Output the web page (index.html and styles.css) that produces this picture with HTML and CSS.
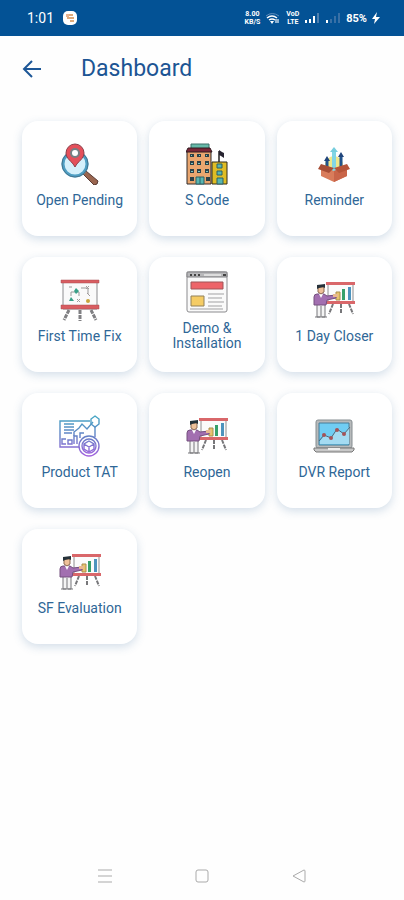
FILE: index.html
```html
<!DOCTYPE html>
<html lang="en">
<head>
    <meta charset="UTF-8">
    <meta name="viewport" content="width=device-width, initial-scale=1.0">
    <title>Dashboard</title>
    <link rel="stylesheet" href="styles.css">
</head>
<body>
    <!-- shared icon -->
    <svg class="defs" aria-hidden="true">
        <symbol id="presenter" viewBox="0 3 42 42">
            <path d="M20 28l-4 10M36 28l4 10M28 28v10" stroke="#77777a" stroke-width="2" stroke-dasharray="4 1" fill="none"/>
            <path d="M15 8h25v18H15z" fill="#fbfbfb" stroke="#8e8e90"/>
            <path d="M13 6h29v3H13zM13 25h29v3H13z" fill="#d9676a"/>
            <path d="M23 16h4v8h-4z" fill="#e8c36a" stroke="#a98d4e"/>
            <path d="M29 13h3v11h-3z" fill="#36a06a"/>
            <path d="M35 11h3v13h-3z" fill="#4d93bd"/>
            <path d="M4 28h8v13H4z" fill="#f4f4f4" stroke="#77777a"/>
            <path d="M8 30v11M2 41h5M9 41h5" stroke="#77777a" fill="none"/>
            <path d="M4 18h7l3 2 9-1v3l-9 2-1 5H1v-8q0-3 3-3z" fill="#a26fb0" stroke="#75507f"/>
            <path d="M6 18l2 4 2-4" fill="#fff"/>
            <path d="M20 18h5v3h-5z" fill="#e9b98f"/>
            <path d="M5 11h6v5l-3 2-3-2z" fill="#efc19a" stroke="#8d6b52"/>
            <path d="M4 13V9l8-1v4l-2-1-4 1z" fill="#26323a"/>
        </symbol>
    </svg>

    <div class="status-bar">
        <div class="status-left">
            <span class="clock">1:01</span>
            <svg width="16" height="16" viewBox="0 0 16 16">
                <rect x="1" y="1" width="14" height="14" rx="5" fill="#fff"/>
                <path d="M4 5h7M5 8h7M8 11h4" stroke="#dfab7c" stroke-width="2"/>
                <path d="M4 4h3v3H4z" fill="#e7b392"/>
            </svg>
        </div>
        <div class="status-right">
            <div class="stacked"><span>8.00</span><span>KB/S</span></div>
            <svg width="16" height="14" viewBox="0 0 16 14">
                <path d="M1 5q6-5 13 0" fill="none" stroke="#5f8dbb" stroke-width="1"/>
                <path d="M2 7q5-4 10 0M4 9q3-2 6 0" fill="none" stroke="#fff" stroke-width="1.5"/>
                <path d="M5 10h4l-2 3z" fill="#fff"/>
                <path d="M11 12V8M13 8v4" stroke="#dbe6f1" stroke-width="1.3"/>
            </svg>
            <div class="stacked"><span>VoD</span><span>LTE</span></div>
            <svg width="16" height="14" viewBox="0 0 16 14">
                <path d="M1 9h2v3H1zM5 8h2v4H5zM9 5h2v7H9z" fill="#fff"/>
                <path d="M13 2h2v10h-2z" fill="#4e7fae"/>
            </svg>
            <svg width="16" height="14" viewBox="0 0 16 14">
                <path d="M1 9h2v3H1z" fill="#fff"/>
                <path d="M5 8h2v4H5zM9 5h2v7H9zM13 2h2v10h-2z" fill="#3870a6"/>
            </svg>
            <span class="battery">85%</span>
            <svg width="8" height="14" viewBox="0 0 8 14"><path d="M5 1L0 8h3l-1 5 6-7H4z" fill="#fff"/></svg>
        </div>
    </div>

    <header class="top-bar">
        <button class="back" type="button" aria-label="Back">
            <svg width="20" height="20" viewBox="0 0 20 20">
                <path d="M10 2L2 10l8 8M2 10h17" fill="none" stroke="#1d5797" stroke-width="2"/>
            </svg>
        </button>
        <h1>Dashboard</h1>
    </header>

    <main class="tiles">
        <a class="tile" href="#">
            <svg class="icon" viewBox="0 0 42 42">
                <path d="M24 31l3-3 12 10q0 4-4 4z" fill="#9a6650" stroke="#5b3d36"/>
                <circle cx="16" cy="21" r="12" fill="#d5f0fb" stroke="#4f9fc4" stroke-width="3"/>
                <circle cx="16" cy="21" r="13" fill="none" stroke="#44758f" stroke-width="1"/>
                <path d="M16 24c-3-6-9-8-9-14a9 9 0 0 1 18 0c0 6-6 8-9 14z" fill="#e4505b" stroke="#8c3f4a"/>
                <circle cx="16" cy="10" r="5" fill="#777f84"/>
                <circle cx="16" cy="10" r="3" fill="#fff"/>
            </svg>
            <span>Open Pending</span>
        </a>
        <a class="tile" href="#">
            <svg class="icon" viewBox="0 0 42 42">
                <path d="M5 1h18v5H5z" fill="#66b9a8" stroke="#3b6f68"/>
                <path d="M1 8h24v33H1z" fill="#e9a66f" stroke="#2e2a2b"/>
                <path d="M2 5h22l2 4H0z" fill="#7b2637" stroke="#2e1a20"/>
                <path d="M26 19h15v22H26z" fill="#dfbd25" stroke="#2e2a1b"/>
                <path d="M4 11h4v3H4zM11 11h4v3h-4zM19 11h4v3h-4zM4 18h4v4H4zM11 18h4v4h-4zM19 18h4v4h-4zM4 26h4v4H4zM11 26h4v4h-4zM19 26h4v4h-4zM4 34h4v4H4zM20 34h4v4h-4z" fill="#2a4148"/>
                <path d="M5 12h1v1H5zM13 12h1v1h-1zM20 12h1v1h-1zM5 20h2v1H5zM12 20h2v1h-2zM20 20h2v1h-2zM5 28h2v1H5zM12 28h2v1h-2zM20 28h2v1h-2z" fill="#7ec5c2"/>
                <path d="M10 34h8v7h-8zM31 35h6v6h-6zM31 21h5v4h-5zM31 28h5v4h-5z" fill="#58b6b1" stroke="#2b6166"/>
                <path d="M14 34v7" stroke="#2b6166"/>
                <path d="M33 19V8" stroke="#222" stroke-width="1.5"/>
                <path d="M33 7l3 2 2 1v5l-3-2-2-1z" fill="#272431"/>
            </svg>
            <span>S Code</span>
        </a>
        <a class="tile" href="#">
            <svg class="icon" viewBox="0 0 42 42">
                <circle cx="21" cy="22" r="9" fill="#eee78b"/>
                <path d="M14 26V16M28 26V13" stroke="#21538c" stroke-width="3"/>
                <path d="M11 18l3-5 3 5zM25 14l3-5 3 5z" fill="#21457c"/>
                <path d="M21 29V8" stroke="#82d6e5" stroke-width="4"/>
                <path d="M17 9l4-5 4 5z" fill="#77cede"/>
                <path d="M8 23l13 5 13-5v10l-13 6-13-6z" fill="#d97c5b"/>
                <path d="M21 28l13-5v10l-13 6z" fill="#c96549"/>
                <path d="M8 21l13 4-5 5-11-4z" fill="#a74d35"/>
                <path d="M34 21l-13 4 5 5 11-4z" fill="#b6553a"/>
            </svg>
            <span>Reminder</span>
        </a>
        <a class="tile" href="#">
            <svg class="icon" viewBox="0 0 42 42">
                <path d="M10 31L5 41M21 31v11M32 31l5 10" stroke="#808083" stroke-width="3" stroke-dasharray="4 1"/>
                <path d="M4 3h34v27H4z" fill="#fafafa" stroke="#8c8c8f"/>
                <path d="M2 1h38v3H2zM2 26h38v4H2z" fill="#d95d61" stroke="#a64f52" stroke-width=".5"/>
                <path d="M12 17v-4h8v4M22 9h7v6M10 8h3" fill="none" stroke="#999"/>
                <path d="M27 7l3 3M30 7l-3 3M18 20l3 3M21 20l-3 3M28 14l3 3" stroke="#a39d9d"/>
                <path d="M12 18l3 4h-5zM17 9l3 3-3 3-2-3z" fill="#39a088"/>
                <circle cx="29" cy="22" r="2" fill="#c8a43c"/>
            </svg>
            <span>First Time Fix</span>
        </a>
        <a class="tile" href="#">
            <svg class="icon" viewBox="0 0 42 42">
                <rect x="1" y="1" width="40" height="40" rx="2" fill="#fafafa" stroke="#8b8b8e"/>
                <path d="M1 1h40v5H1z" fill="#b8b8ba" stroke="#808083"/>
                <path d="M4 4h2M8 4h2M12 4h2M37 4h3" stroke="#444" stroke-width="2"/>
                <path d="M18 4h17" stroke="#ddd" stroke-width="2"/>
                <path d="M5 11h32v7H5z" fill="#ed6469" stroke="#9f5558"/>
                <path d="M5 25h13v10H5z" fill="#f5cc65" stroke="#91805a"/>
                <path d="M22 23h16M22 27h14M22 31h16M22 35h14M4 38h33" stroke="#a1a1a3"/>
            </svg>
            <span>Demo &amp; Installation</span>
        </a>
        <a class="tile" href="#">
            <svg class="icon" viewBox="0 0 42 42"><use href="#presenter"/></svg>
            <span>1 Day Closer</span>
        </a>
        <a class="tile" href="#">
            <svg class="icon" viewBox="0 0 42 42">
                <defs>
                    <linearGradient id="tat" gradientUnits="userSpaceOnUse" x1="0" y1="2" x2="0" y2="42">
                        <stop offset="0" stop-color="#46a5c4"/>
                        <stop offset=".5" stop-color="#667fc6"/>
                        <stop offset="1" stop-color="#a561df"/>
                    </linearGradient>
                </defs>
                <g fill="none" stroke="url(#tat)" stroke-width="1.4">
                    <path d="M31 6H1v26h19M36 11v11"/>
                    <path d="M5 9h10M5 12h10M5 15h10M5 18h8"/>
                    <path d="M15 21v-4l5-4 3-4 5 5 6-7"/>
                    <path d="M7 24H3v5h4M9 25h4v4H9zM15 29v-8h3v8M21 23v-5h4"/>
                    <path d="M36 1l4 3v5l-4 3-4-3V4z"/>
                    <circle cx="30" cy="31" r="10"/>
                    <circle cx="30" cy="31" r="7"/>
                    <path d="M30 26l5 3v5l-5 3-5-3v-5zM25 29l5 3 5-3M30 32v5"/>
                </g>
            </svg>
            <span>Product TAT</span>
        </a>
        <a class="tile" href="#">
            <svg class="icon" viewBox="0 0 42 42"><use href="#presenter"/></svg>
            <span>Reopen</span>
        </a>
        <a class="tile" href="#">
            <svg class="icon" viewBox="0 0 42 42">
                <rect x="3" y="5" width="36" height="28" rx="2" fill="#b7babb" stroke="#858d90"/>
                <path d="M6 8h30v22H6z" fill="#70cdf3" stroke="#477d98"/>
                <path d="M7 26l5-6 6 3 6-9 7 5 5-7v17H7z" fill="#a4dbf2"/>
                <path d="M6 26l5-6 7 3 6-9 7 5 6-7" fill="none" stroke="#4c687b"/>
                <circle cx="11" cy="20" r="2" fill="#a45358"/>
                <circle cx="18" cy="23" r="2" fill="#a45358"/>
                <circle cx="24" cy="15" r="2" fill="#a45358"/>
                <circle cx="31" cy="19" r="2" fill="#a45358"/>
                <path d="M1 33h40v2l-2 2H3l-2-2z" fill="#c8c8c8" stroke="#777"/>
                <path d="M15 33h12v2H15z" fill="#eee"/>
            </svg>
            <span>DVR Report</span>
        </a>
        <a class="tile" href="#">
            <svg class="icon" viewBox="0 0 42 42"><use href="#presenter"/></svg>
            <span>SF Evaluation</span>
        </a>
    </main>

    <nav class="system-nav">
        <button type="button" aria-label="Recent apps">
            <svg width="16" height="16" viewBox="0 0 16 16"><path d="M1 2h14M1 8h14M1 14h14"/></svg>
        </button>
        <button type="button" aria-label="Home">
            <svg width="16" height="16" viewBox="0 0 16 16"><rect x="2" y="2" width="12" height="12" rx="2"/></svg>
        </button>
        <button type="button" aria-label="Go back">
            <svg width="16" height="16" viewBox="0 0 16 16"><path d="M2 8l11-6q1 0 1 1v10q0 1-1 1z"/></svg>
        </button>
    </nav>
</body>
</html>
```

FILE: styles.css
```css
* {
    box-sizing: border-box;
}
body {
    font-family: Roboto, "Liberation Sans", sans-serif;
    margin: 0;
    background: #fefefe;
    color: #2f6797;
    display: flex;
    flex-direction: column;
    min-height: 100vh;
}
button {
    background: none;
    border: none;
    padding: 0;
    cursor: pointer;
}
svg {
    display: block;
}
.defs {
    position: absolute;
    width: 0;
    height: 0;
}
.status-bar {
    display: flex;
    justify-content: space-between;
    align-items: center;
    height: 36px;
    padding: 0 24px 0 27px;
    background: #035295;
    color: #fff;
}
.status-left {
    display: flex;
    align-items: center;
    gap: 8px;
}
.clock {
    font-size: 14px;
}
.status-right {
    display: flex;
    align-items: center;
    gap: 5px;
}
.stacked {
    display: flex;
    flex-direction: column;
    align-items: center;
    font-size: 7px;
    line-height: 8px;
    font-weight: 700;
}
.battery {
    font-size: 11px;
    font-weight: 700;
}
.top-bar {
    display: flex;
    align-items: center;
    gap: 39px;
    height: 65px;
    padding: 0 22px;
}
.top-bar h1 {
    margin: 0;
    font-size: 23px;
    line-height: 28px;
    font-weight: 400;
    color: #1c5594;
}
.tiles {
    flex: 1;
    display: grid;
    grid-template-columns: repeat(3, 1fr);
    align-content: start;
    gap: 21px 12px;
    padding: 20px 12px 20px 22px;
}
.tile {
    display: flex;
    flex-direction: column;
    align-items: center;
    justify-content: center;
    gap: 8px;
    height: 115px;
    padding: 0 12px 7px;
    border-radius: 16px;
    background: #fff;
    box-shadow: 0 3px 10px rgba(60, 110, 160, 0.22);
    color: #2f6797;
    font-size: 14px;
    line-height: 15px;
    text-align: center;
    text-decoration: none;
}
.icon {
    width: 42px;
    height: 42px;
}
.system-nav {
    display: grid;
    grid-template-columns: repeat(3, 1fr);
    height: 49px;
    padding: 0 14%;
}
.system-nav button {
    display: flex;
    align-items: center;
    justify-content: center;
}
.system-nav svg {
    fill: none;
    stroke: #aaa;
}
```
